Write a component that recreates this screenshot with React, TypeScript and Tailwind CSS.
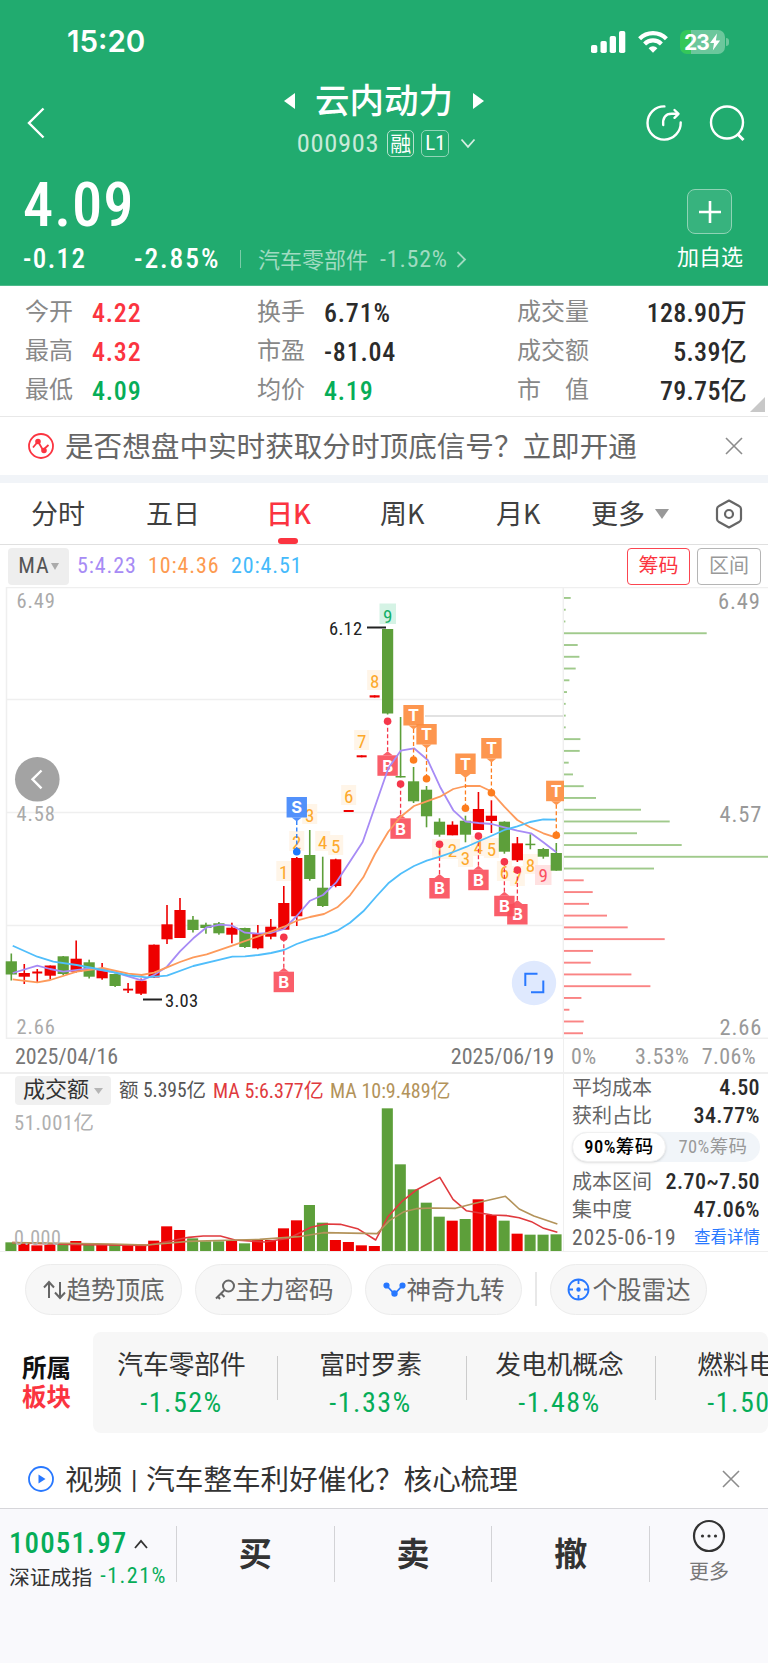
import type { ReactNode } from "react";

const RED = "#ee0000";
const GREEN = "#5d9f3a";

// [up(1)/down(0), high, body top, body bottom, low]
const candles = [
    [0, 953.5, 961.3, 974.5, 980.5], [1, 964, 973, 976.7, 984], [1, 969, 971.5, 973.5, 982],
    [1, 965.5, 965.5, 975.7, 979.5], [0, 956, 956.3, 974, 975], [1, 940.5, 958.7, 971.7, 972.5],
    [0, 959.7, 962.3, 976.7, 978.5], [1, 963, 969.5, 978.3, 979.7], [0, 973.5, 974, 986, 987],
    [1, 983, 988.7, 990.5, 993], [1, 978.5, 980.7, 993.7, 995], [1, 944.5, 944.7, 977.5, 978],
    [1, 905, 924.3, 939.3, 944], [1, 898, 910, 938, 938], [0, 916, 919.7, 930, 932.5],
    [0, 922.7, 924.7, 928, 933.7], [0, 922, 923.3, 933.3, 934.7], [1, 922.7, 927.7, 934.7, 943.3],
    [0, 927.7, 928, 947, 948], [1, 925, 933.3, 948.3, 949.3], [1, 919, 926.7, 936.7, 939.3],
    [1, 886, 903, 929.7, 929.7], [1, 857, 858, 916.3, 926], [0, 830, 855, 879, 880.7],
    [0, 856.7, 887.7, 906, 907], [1, 858.7, 859.3, 886, 887.3], [1, 810, 810, 812, 812],
    [1, 755.3, 755.3, 757.3, 757.3], [1, 695.3, 695.3, 697.5, 697.5], [0, 629, 629, 713.5, 714.5],
    [0, 717, 776, 777.5, 777.5], [0, 767, 781.3, 801.3, 803], [0, 786, 789.7, 816.3, 827.3],
    [0, 818.3, 821.7, 834.7, 836.7], [1, 821.3, 824.7, 835.3, 835.3], [0, 815.7, 820.7, 834.7, 842.3],
    [1, 792, 809, 830, 830], [1, 800.3, 815.7, 821, 833], [0, 821.3, 821.7, 851.7, 853.7],
    [1, 837, 843.3, 860.3, 862], [0, 834.3, 843.7, 845.2, 849.3], [0, 848, 849, 856.7, 858.7],
    [0, 843, 853, 870.7, 870.7],
];

const ma5 = "12.7,973 37.3,965.7 50,969 63.3,971.7 90,968.3 115,972.3 141.7,980.3 154,975 167,966.7 180,951.3 193.3,938.3 206.7,927.3 220,924.7 232.3,925.7 245,932.7 258.3,933.7 271,933 284,929 296.7,916 310,900.7 323,895 336,882.7 349,863 362.7,842 388.3,768.3 400.7,750.7 414,748.3 427.7,760 440,786.7 453.3,810.3 465.7,821.7 478.7,823 491.7,824 504.3,827.3 517.3,830.7 531,833.3 543.3,842.3 556.3,852.3";
const ma10 = "12.7,979.3 37.3,982.3 50.3,980 76.7,971.7 102.7,968 128.3,973.7 141.7,975 154,972.7 167,967.3 180,962 193.3,957.3 206.7,954.3 232.3,945.7 258.3,936.3 284,926.7 296.7,920.7 310,917 324,914 337.3,907.3 350,895.3 363.3,877.3 375,854 388.3,831.7 400.7,816.7 414,806 426.7,801.3 440,796.7 453.3,789 465.7,786 480,786 490,790.7 504.3,806.7 517.3,820 530,827.3 543.3,833.3 556.3,837.7";
const ma20 = "12.7,945.7 37.3,956.7 53.3,961.7 76.7,965 102.7,970 128.3,975.3 146.7,977.3 167,975.7 193.3,966 220,959.7 232.3,956.7 245,956.3 258.3,955 271,953 284,950 296.7,944 310,939.3 324,935.7 337.3,930.7 350,922.7 363.3,911.3 376.7,896 388.3,883.3 400.7,873.7 414,866 426.7,860.7 440,856.7 453.3,852 466.7,846.7 480,840.7 493.3,835 504.3,830 517.3,826.3 530,822 543.3,819.3 556.3,819.7";

// [digit, candle index, center y]
const nines = [
    [1, 21, 872], [2, 22, 842], [3, 23, 815], [4, 24, 842], [5, 25, 846], [6, 26, 796], [7, 27, 741], [8, 28, 681],
    [1, 33, 850], [2, 34, 850], [3, 35, 858], [4, 36, 847], [5, 37, 849], [6, 38, 872], [7, 39, 877], [8, 40, 865],
];

// [candle index, box top, dot y]
const sellTags = [[31, 705, 760], [32, 724, 778.7], [35, 753.5, 808.3], [37, 738, 792.7], [42, 780.7, 835.3]];
const buyTags = [[21, 971.7, 937.3], [29, 755.3, 721.3], [30, 818.3, 784], [33, 878, 844.3], [36, 869.7, 836], [39, 904, 870], [38, 895.7, 861.7]];

const chips = [
    7, 2, 1.7, 143, 14, 15.7, 12, 5.7, 3.3, 2, 2, 2, 16.7, 16, 5, 9.3, 20, 32.3, 77.3, 106, 73.3, 118, 204.3, 90.3,
    20, 29, 25.3, 43.3, 64, 101, 29.3, 27, 67.7, 86.7, 17.7, 5.7, 20, 19.3,
];

const volumeTops = [
    607, 612, 616, 614, 612, 603, 614, 612, 614, 616, 614, 602, 559, 570, 595, 604, 604, 603, 610, 600, 600, 565,
    541, 495, 548, 600, 606, 616, 618, 205, 373, 448, 488, 530, 542, 537, 478, 525, 542, 581, 584, 584, 583,
];

const sectors = [
    { name: "汽车零部件", change: "-1.52%" },
    { name: "富时罗素", change: "-1.33%" },
    { name: "发电机概念", change: "-1.48%" },
    { name: "燃料电池", change: "-1.50%" },
];

const cx = (i: number) => 11.3 + 12.976 * i;

function StatusBar() {
    return (
        <div className="h-[84px] pl-[67px] pr-[39px] flex items-center justify-between">
            <span className="font-['Inter'] text-[29.5px] font-semibold leading-none">15:20</span>
            <div className="flex items-center gap-3">
                <svg width="35" height="22" viewBox="0 0 35 22" fill="#fff">
                    <rect x="0" y="14" width="6.3" height="8" rx="1.8" />
                    <rect x="9.5" y="10" width="6.3" height="12" rx="1.8" />
                    <rect x="18.7" y="5" width="6.3" height="17" rx="1.8" />
                    <rect x="28" y="0" width="6.3" height="22" rx="1.8" />
                </svg>
                <svg width="30" height="22" viewBox="0 0 30 22" fill="none" stroke="#fff" strokeWidth="4.2">
                    <path d="M1.6 7.7a19 19 0 0 1 26.8 0" />
                    <path d="M6.6 12.9a12 12 0 0 1 16.8 0" />
                    <path d="M15 21.8l-4.4-4.6a6.2 6.2 0 0 1 8.8 0z" fill="#fff" stroke="none" />
                </svg>
                <div className="flex items-center gap-px">
                    <div className="w-[45px] h-6 rounded-[7px] overflow-hidden flex items-center justify-center bg-[linear-gradient(90deg,#34c759_24%,#6bc79c_24%)]">
                        <span className="font-['Inter'] text-[21px] font-bold leading-none tracking-[-0.8px]">23</span>
                        <svg width="12" height="18" viewBox="0 0 11 18" fill="#fff">
                            <path d="M7.5 0.5L0.5 10h4L3.3 17.5L10.6 7.5H6.4z" />
                        </svg>
                    </div>
                    <div className="w-[3px] h-2 rounded-r-full bg-[#6bc79c]" />
                </div>
            </div>
        </div>
    );
}

function Header() {
    return (
        <header className="h-[286px] bg-[#21ab6f] text-white border-b border-[#4dba8b]">
            <StatusBar />
            <div className="h-[80px] flex justify-between">
                <div className="w-[200px] pl-[26px] pt-[23px]">
                    <svg width="20" height="32" viewBox="0 0 20 32" fill="none" stroke="#fff" strokeWidth="2.4">
                        <path d="M17.5 1.5L3 16l14.5 14.5" />
                    </svg>
                </div>
                <div className="flex flex-col items-center">
                    <div className="h-[34px] flex items-center gap-5">
                        <svg width="11" height="16" viewBox="0 0 11 16" fill="#fff"><path d="M11 0v16L0 8z" /></svg>
                        <span className="pb-[5px] text-[34.5px] leading-none font-medium">云内动力</span>
                        <svg width="11" height="16" viewBox="0 0 11 16" fill="#fff"><path d="M0 0v16l11-8z" /></svg>
                    </div>
                    <div className="mt-[11px] pl-[5px] h-7 flex items-center">
                        <span className="num text-[26.5px] leading-none tracking-[0.7px] text-[#c8ead9]">000903</span>
                        <span className="ml-2 w-[27px] h-[27px] pb-px border-[1.5px] border-[#b5e2cd] rounded-[5px] flex items-center justify-center text-[21px] leading-none">融</span>
                        <span className="num ml-[7px] w-7 h-[27px] border border-[#90d5b7] rounded-[5px] flex items-center justify-center text-[21px] leading-none">L1</span>
                        <svg className="ml-[11px]" width="16" height="11" viewBox="0 0 16 11" fill="none" stroke="#d3eee1" strokeWidth="1.8">
                            <path d="M1.5 1.5L8 8.8l6.5-7.3" />
                        </svg>
                    </div>
                </div>
                <div className="w-[200px] pr-[23px] pt-5 flex justify-end gap-[26px]">
                    <svg width="38" height="38" viewBox="0 0 38 38" fill="none" stroke="#fff" strokeWidth="2.4" strokeLinecap="round" strokeLinejoin="round">
                        <path d="M19.4 2.4a16.6 16.6 0 1 0 16.3 16" />
                        <path d="M18.200 21c-.7-7.200 2.300-11.200 8.300-11.200h5.500" />
                        <path d="M29.500 6l4 3.800-4 4" />
                    </svg>
                    <svg width="36" height="38" viewBox="0 0 36 38" fill="none" stroke="#fff" strokeWidth="2.4">
                        <circle cx="18" cy="18.500" r="16" />
                        <path d="M28.500 30l6 6" strokeWidth="3" />
                    </svg>
                </div>
            </div>
            <div className="h-[121px] pl-[23px] pr-[25px] flex justify-between">
                <div>
                    <div className="num mt-[11px] text-[60.500px] leading-[62px] tracking-[1px] font-medium">4.09</div>
                    <div className="mt-2 h-7 flex items-center leading-none">
                        <span className="num w-[111px] text-[27px] tracking-[1.400px] font-medium">-0.12</span>
                        <span className="num w-[106px] text-[27.500px] tracking-[1.900px] font-medium">-2.85%</span>
                        <span className="w-px h-[18px] bg-[#7acca8]" />
                        <span className="ml-[17px] pb-0.5 text-[22px] text-[#a0dbc1]">汽车零部件</span>
                        <span className="num ml-3 text-[24px] tracking-[0.800px] text-[#a0dbc1]">-1.52%</span>
                        <svg className="ml-2" width="11" height="17" viewBox="0 0 11 17" fill="none" stroke="#a0dbc1" strokeWidth="1.8">
                            <path d="M1.500 1L9 8.500 1.500 16" />
                        </svg>
                    </div>
                </div>
                <div className="flex flex-col items-center pt-[25px]">
                    <div className="w-[45px] h-[45px] border-[1.5px] border-[#8fd3b5] rounded-lg bg-[#37b37e] flex items-center justify-center">
                        <svg width="24" height="24" viewBox="0 0 24 24" stroke="#fff" strokeWidth="2.600"><path d="M12 1v22M1 12h22" /></svg>
                    </div>
                    <span className="mt-[10px] text-[22px] leading-none">加自选</span>
                </div>
            </div>
        </header>
    );
}

function Stat({ label, value, color = "text-[#2b2b2b]", wide }: { label: string; value: string; color?: string; wide?: boolean }) {
    return (
        <div className={`h-[39px] flex items-center leading-none ${wide ? "justify-between tracking-[0.300px]" : "tracking-[0.800px]"}`}>
            <span className="w-[72px] shrink-0 pb-[3px] text-[24px] tracking-normal text-[#888] -mr-[5px] whitespace-pre">{label}</span>
            <span className={`num pt-0.5 text-[26px] font-medium ${color}`}>{value}</span>
        </div>
    );
}

function Stats() {
    return (
        <section className="relative h-[131px] pt-1.5 pl-[25px] pr-[21px] flex border-b border-[#e8e8e8]">
            <div className="w-[232px]">
                <Stat label="今开" value="4.22" color="text-[#fb3440]" />
                <Stat label="最高" value="4.32" color="text-[#fb3440]" />
                <Stat label="最低" value="4.09" color="text-[#06ad58]" />
            </div>
            <div className="w-[260px]">
                <Stat label="换手" value="6.71%" />
                <Stat label="市盈" value="-81.04" />
                <Stat label="均价" value="4.19" color="text-[#06ad58]" />
            </div>
            <div className="flex-1">
                <Stat wide label="成交量" value="128.90万" />
                <Stat wide label="成交额" value="5.39亿" />
                <Stat wide label="市　值" value="79.75亿" />
            </div>
            <svg className="absolute right-[3px] bottom-1" width="15" height="15" viewBox="0 0 15 15" fill="#c8c8c8"><path d="M15 0v15H0z" /></svg>
        </section>
    );
}

function CloseIcon() {
    return (
        <svg width="18" height="18" viewBox="0 0 18 18" stroke="#8c8c8c" strokeWidth="1.6"><path d="M1 1l16 16M17 1L1 17" /></svg>
    );
}

function Notice() {
    return (
        <section className="h-[66px] pl-7 pr-[25px] flex items-center border-b-8 border-[#f1f4f8]">
            <svg width="26" height="26" viewBox="0 0 26 26" fill="none" stroke="#fb3440" strokeWidth="1.800">
                <circle cx="13" cy="13" r="12" />
                <path d="M5 14.500l5-6 5 8.500 5.500-5" />
                <circle cx="10" cy="8.500" r="1.900" fill="#fb3440" />
                <circle cx="16" cy="17.500" r="1.900" fill="#fb3440" />
            </svg>
            <span className="ml-[11px] pb-px flex-1 text-[28.600px] leading-none text-[#666] whitespace-nowrap">是否想盘中实时获取分时顶底信号？立即开通</span>
            <CloseIcon />
        </section>
    );
}

function Tabs() {
    return (
        <nav className="h-[62px] pl-[31px] pr-[25px] flex items-center text-[27px] leading-none text-[#404040] border-b border-[#e0e0e0]">
            <span className="w-[115px] pb-[3px]">分时</span>
            <span className="w-[120px] pb-[3px]">五日</span>
            <span className="relative h-full w-[114px] pb-[3px] flex items-center text-[#fb3440] font-medium">
                日K
                <i className="absolute left-3 bottom-0 w-5 h-1.5 rounded-full bg-[#fb3440]" />
            </span>
            <span className="w-[116px] pb-[3px]">周K</span>
            <span className="w-[95px] pb-[3px]">月K</span>
            <span className="flex-1 flex items-center gap-2.5">
                <span className="pb-[3px]">更多</span>
                <svg width="14" height="10" viewBox="0 0 14 10" fill="#999"><path d="M0 0h14L7 10z" /></svg>
            </span>
            <svg width="28" height="30" viewBox="0 0 28 30" fill="none" stroke="#666" strokeWidth="2.200" strokeLinejoin="round">
                <path d="M14 1.500l10 5.500q2 1 2 3v10q0 2-2 3l-10 5.500L4 23q-2-1-2-3V10q0-2 2-3z" />
                <circle cx="14" cy="15" r="4" />
            </svg>
        </nav>
    );
}

function MaBar() {
    return (
        <div className="num h-[42px] pl-2 pr-[7px] flex items-center leading-none text-[22px]">
            <span className="w-[61px] h-[37px] rounded bg-[#eee] text-[#555] tracking-[1px] flex items-center justify-center gap-px">
                MA
                <svg width="8" height="7" viewBox="0 0 8 7" fill="#aaa"><path d="M0 0h8L4 7z" /></svg>
            </span>
            <span className="ml-2 w-[71px] tracking-[0.900px] text-[#a78bf5]">5:4.23</span>
            <span className="w-[83px] tracking-[0.900px] text-[#fd9a50]">10:4.36</span>
            <span className="flex-1 tracking-[0.900px] text-[#45bafb]">20:4.51</span>
            <span className="w-[63px] h-[37px] border-[1.5px] border-[#fb4550] rounded text-[20px] text-[#fb3440] flex items-center justify-center">筹码</span>
            <span className="ml-[7px] w-16 h-[37px] border-[1.5px] border-[#b5b5b5] rounded text-[20px] text-[#999] flex items-center justify-center">区间</span>
        </div>
    );
}

function Tag({ x, top, dot, letter, fill, dotFill }: { x: number; top: number; dot: number; letter: string; fill: string; dotFill: string }) {
    const below = dot < top;
    const tip = below ? `M${x - 5} ${top}L${x} ${top - 4}L${x + 5} ${top}z` : `M${x - 5} ${top + 20.5}L${x} ${top + 24.5}L${x + 5} ${top + 20.5}z`;
    return (
        <g>
            <path d={`M${x} ${below ? top - 4 : top + 24}V${dot}`} stroke={dotFill} strokeWidth="1.3" strokeDasharray="4 2.5" />
            <circle cx={x} cy={dot} r="3.8" fill={dotFill} />
            <path d={`M${x - 10.2} ${top}h20.4v20.5h-20.4z`} fill={fill} fillOpacity="0.9" />
            <path d={tip} fill={fill} fillOpacity="0.9" />
            <text className="font-['Inter']" x={x} y={top + 16.300} textAnchor="middle" fontSize="16.500" fontWeight="700" fill="#fff">{letter}</text>
        </g>
    );
}

function KLineChart() {
    return (
        <svg className="num block" width="564" height="452" viewBox="0 587 564 452">
            <g stroke="#efefef" strokeWidth="1.5" fill="none">
                <path d="M6 587.500H564M6 699.500H564M6 812.500H564M6 925.500H564M6 1038.200H564M6.500 587V1039M563.300 587V1039" />
            </g>
            <path d="M425 716H563" stroke="#e2e2e2" strokeWidth="2" />
            <g fontSize="20.500" fill="#aaa" letterSpacing="0.900">
                <text x="16.500" y="607.500">6.49</text>
                <text x="16.500" y="820.500">4.58</text>
                <text x="16.500" y="1034">2.66</text>
            </g>
            {nines.map(([n, i, y]) => (
                <g key={i}>
                    <rect x={cx(i) - 7.500} y={y - 11} width="15" height="20" fill="#fff5e8" />
                    <text x={cx(i)} y={y + 7} textAnchor="middle" fontSize="19" fill="#fda92c">{n}</text>
                </g>
            ))}
            <rect x="379.500" y="603.500" width="16.500" height="20.500" fill="#d5f3e5" />
            <text x="387.600" y="622.500" textAnchor="middle" fontSize="19" fill="#14b068">9</text>
            <rect x="535" y="865" width="16.500" height="20" fill="#ffe1e1" />
            <text x="543.300" y="882" textAnchor="middle" fontSize="19" fill="#fb5060">9</text>
            {candles.map(([up, high, top, bottom, low], i) => (
                <g key={i} fill={up ? RED : GREEN}>
                    <rect x={cx(i) - 0.8} y={high} width="1.600" height={low - high} />
                    <rect x={cx(i) - (bottom - top < 2.500 ? 5 : 5.600)} y={top} width={bottom - top < 2.500 ? 10 : 11.200} height={bottom - top} />
                </g>
            ))}
            {buyTags.map(([i, top, dot]) => (
                <Tag key={i} x={cx(i)} top={top} dot={dot} letter="B" fill="#f94c5a" dotFill="#f5364a" />
            ))}
            <g fill="none" strokeWidth="1.800" strokeLinejoin="round">
                <polyline points={ma5} stroke="#a78bf5" />
                <polyline points={ma10} stroke="#fd9a5b" />
                <polyline points={ma20} stroke="#50befb" />
            </g>
            {sellTags.map(([i, top, dot]) => (
                <Tag key={i} x={cx(i)} top={top} dot={dot} letter="T" fill="#fd8b3c" dotFill="#fd7d1e" />
            ))}
            <Tag x={cx(22)} top={797} dot={851.7} letter="S" fill="#3f85fb" dotFill="#1e78fb" />
            <g fontSize="18.500" fill="#222" letterSpacing="0.300">
                <text x="329" y="634.500">6.12</text>
                <text x="165" y="1006.500">3.03</text>
                <path d="M367 627.500H386M143 999.500H162" stroke="#222" strokeWidth="1.800" />
            </g>
            <circle cx="37.300" cy="779.300" r="22.300" fill="#a3a3a3" />
            <path d="M41.500 770.500L32.500 779.300l9 9" fill="none" stroke="#fff" strokeWidth="2.400" />
            <circle cx="534" cy="983" r="22.200" fill="#dfe9fe" />
            <path d="M525.300 986V973.700H537.500M543.300 980.500V992.200H531" fill="none" stroke="#2878ff" strokeWidth="2" />
        </svg>
    );
}

function ChipDistribution() {
    return (
        <svg className="num block" width="204" height="452" viewBox="564 587 204 452">
            <path d="M564 587.500H768M564 1038.200H768" stroke="#efefef" strokeWidth="1.500" />
            {chips.map((w, i) => (
                <rect key={i} x="563.700" y={597 + i * 11.765} width={w} height="1.900" fill={i < 24 ? "#a0ca8c" : "#fa8484"} />
            ))}
            <g fontSize="22.500" fill="#999" letterSpacing="0.900">
                <text x="718" y="609">6.49</text>
                <text x="719.500" y="822">4.57</text>
                <text x="719.500" y="1035">2.66</text>
            </g>
        </svg>
    );
}

function VolumeChart() {
    return (
        <div className="relative w-[564px] h-[180px] border-t-2 border-r border-b border-[#efefef]">
            <svg className="absolute left-0 bottom-0" width="563" height="176" viewBox="0 105 1149.500 528" preserveAspectRatio="none">
                {volumeTops.map((top, i) => (
                    <rect key={i} x={11 + 26.500 * i} y={top} width="22.600" height={633 - top} fill={candles[i][0] ? RED : GREEN} />
                ))}
                <g fill="none" strokeWidth="1.600" strokeLinejoin="round">
                    <polyline vectorEffect="non-scaling-stroke" stroke="#e03a3e" points="25,608 140,613 300,616 345,604 385,592 415,588 450,588 480,600 540,606 590,595 635,562 665,552 695,553 730,566 767,600 792,530 820,485 850,450 898,412 925,478 952,512 1005,525 1035,527 1060,533 1085,545 1110,565 1138,577" />
                    <polyline vectorEffect="non-scaling-stroke" stroke="#b3935a" points="25,608 230,612 300,615 385,604 530,598 610,590 660,578 770,581 795,542 825,515 850,506 885,504 930,505 970,490 1032,469 1060,507 1090,528 1138,552" />
                </g>
            </svg>
            <div className="relative pt-0.5 pl-[15px] flex items-center leading-none num text-[20px] whitespace-nowrap">
                <span className="w-24 h-[29px] rounded-sm bg-[#f0f0f0] flex items-center justify-center gap-[5px] text-[22px] text-[#333]">
                    <span className="pb-px">成交额</span>
                    <svg width="9" height="6" viewBox="0 0 9 6" fill="#b5b5b5"><path d="M0 0h9L4.500 6z" /></svg>
                </span>
                <span className="ml-2 pt-px w-[94px] text-[#555] text-[19.500px]">额 5.395亿</span>
                <span className="w-[117px] pt-px text-[#e03a3e]">MA 5:6.377亿</span>
                <span className="pt-px text-[#b3935a]">MA 10:9.489亿</span>
            </div>
            <div className="relative num ml-3.5 mt-2 text-[20.500px] leading-none tracking-[0.600px] text-[#b0b0b0]">51.001亿</div>
            <div className="absolute num left-3.5 bottom-[3px] text-[20px] leading-none tracking-[0.500px] text-[#b0b0b0]">0.000</div>
        </div>
    );
}

function CostRow({ label, children }: { label: string; children: ReactNode }) {
    return (
        <div className="h-7 flex items-center justify-between leading-none text-[20px] text-[#666]">
            <span className="pb-px">{label}</span>
            {children}
        </div>
    );
}

function CostValue({ children }: { children: ReactNode }) {
    return <b className="font-medium text-[22px] tracking-[0.400px] text-[#2b2b2b]">{children}</b>;
}

function CostPanel() {
    return (
        <div className="flex-1 px-2 border-t-2 border-b border-[#efefef] h-[180px] num">
            <CostRow label="平均成本"><CostValue>4.50</CostValue></CostRow>
            <CostRow label="获利占比"><CostValue>34.77%</CostValue></CostRow>
            <div className="mt-0.5 mb-1.5 h-[30px] rounded-full bg-[#f1f5f9] flex items-center text-[18.500px] leading-none tracking-[0.400px]">
                <span className="w-[94px] h-[30px] rounded-full border border-[#f0f0f0] bg-white shadow-sm text-black font-medium flex items-center justify-center">90%筹码</span>
                <span className="flex-1 text-center text-[#999]">70%筹码</span>
            </div>
            <CostRow label="成本区间"><CostValue>2.70~7.50</CostValue></CostRow>
            <CostRow label="集中度"><CostValue>47.06%</CostValue></CostRow>
            <div className="h-7 flex items-center justify-between leading-none">
                <span className="text-[21.500px] tracking-[0.900px] text-[#666]">2025-06-19</span>
                <span className="text-[16.500px] text-[#2878ff]">查看详情</span>
            </div>
        </div>
    );
}

function Pill({ icon, children }: { icon: ReactNode; children: ReactNode }) {
    return (
        <span className="w-[157px] h-[51px] rounded-full border border-[#ececec] bg-[#f7f7f7] flex items-center justify-center text-[24.500px] leading-none text-[#666] whitespace-nowrap">
            {icon}
            <span>{children}</span>
        </span>
    );
}

function Tools() {
    return (
        <section className="h-[80px] pl-[25px] pt-[12px] flex items-start gap-[13px]">
            <Pill icon={<svg className="mr-px" width="23" height="20" viewBox="0 0 23 20" fill="none" stroke="#666" strokeWidth="2"><path d="M6 18V2.500M1 7.500l5-5.500 5 5.500M17 2v15.500M12 12.500l5 5.500 5-5.500" /></svg>}>趋势顶底</Pill>
            <Pill icon={<svg width="22" height="22" viewBox="0 0 22 22" fill="none" stroke="#666" strokeWidth="2"><circle cx="14.500" cy="7" r="5.500" /><path d="M10.500 11L2 19.500M7 14.500l3.500 3.500M3.500 17l2.500 3" /></svg>}>主力密码</Pill>
            <Pill icon={<svg width="24" height="20" viewBox="0 0 24 20" fill="none" stroke="#2878ff" strokeWidth="1.800"><path d="M3.500 5.500l8 8.500 8-8.500" /><circle cx="3.500" cy="5.500" r="2.200" fill="#2878ff" /><circle cx="19.500" cy="5.500" r="2.200" fill="#2878ff" /><circle cx="11.500" cy="13.500" r="2.300" fill="#2878ff" /></svg>}>神奇九转</Pill>
            <span className="w-0.5 h-[34px] mt-2 bg-[#e8e8e8]" />
            <Pill icon={<svg className="mr-[3px]" width="23" height="23" viewBox="0 0 23 23" fill="none" stroke="#2878ff" strokeWidth="1.800"><circle cx="11.500" cy="11.500" r="10" /><path d="M11.500 1v5M11.500 17v5M1 11.500h5M17 11.500h5" /><circle cx="11.500" cy="11.500" r="1.300" fill="#2878ff" /></svg>}>个股雷达</Pill>
        </section>
    );
}

function Sectors() {
    return (
        <section className="h-[101px] flex items-stretch overflow-hidden">
            <div className="w-[93px] shrink-0 pb-[3px] flex flex-col items-center justify-center text-[24.500px] leading-[29.500px] font-bold">
                <span className="text-[#111]">所属</span>
                <span className="text-[#fb3440]">板块</span>
            </div>
            <div className="flex-1 rounded-lg bg-[#f7f7f7] flex overflow-hidden">
                <div className="flex -ml-1 pt-0.5 items-center">
                    {sectors.map((s) => (
                        <div key={s.name} className="relative w-[189px] pr-1 shrink-0 flex flex-col items-center leading-none">
                            <span className="text-[25.700px] text-[#333]">{s.name}</span>
                            <span className="num mt-[13px] text-[28px] tracking-[1.500px] text-[#06ad58]">{s.change}</span>
                            <i className="absolute right-0 top-1.5 w-px h-11 bg-[#ccc]" />
                        </div>
                    ))}
                </div>
            </div>
        </section>
    );
}

function VideoNews() {
    return (
        <section className="h-[75px] pt-[17px] pl-7 pr-7 flex items-center">
            <svg width="26" height="26" viewBox="0 0 26 26" fill="none" stroke="#2878ff" strokeWidth="1.800">
                <circle cx="13" cy="13" r="12" />
                <path d="M10.500 8.500v9l7-4.500z" fill="#2878ff" stroke="none" />
            </svg>
            <span className="ml-[11px] pb-px flex-1 text-[28.600px] leading-none text-[#333] whitespace-nowrap">
                视频<span className="text-[24px]">丨</span>汽车整车利好催化？核心梳理
            </span>
            <CloseIcon />
        </section>
    );
}

function TradeBar() {
    return (
        <footer className="h-[155px] pt-[17px] bg-[#f9f9fc] border-t border-[#d6d6da] flex items-start leading-none">
            <div className="w-[176px] h-[56px] pl-[9px] flex flex-col">
                <span className="num mt-[3px] flex items-center gap-[7px] text-[29px] tracking-[1.100px] font-medium text-[#06ad58]">
                    10051.97
                    <svg width="14" height="10" viewBox="0 0 14 10" fill="none" stroke="#333" strokeWidth="1.800"><path d="M1 9l6-7 6 7" /></svg>
                </span>
                <span className="mt-[7px] flex items-center text-[20.800px] text-[#333] whitespace-nowrap">
                    深证成指 <span className="num ml-2 text-[22px] tracking-[1.500px] text-[#06ad58]">-1.21%</span>
                </span>
            </div>
            {["买", "卖", "撤"].map((t) => (
                <div key={t} className="w-[157.700px] h-[56px] pb-[3px] border-l border-[#d3d3d6] flex items-center justify-center text-[33px] font-bold text-[#333]">{t}</div>
            ))}
            <div className="flex-1 h-[56px] border-l border-[#d3d3d6] flex flex-col items-center">
                <svg className="-mt-[7px] shrink-0" width="34" height="34" viewBox="0 0 34 34" fill="none" stroke="#333" strokeWidth="2.200">
                    <circle cx="17" cy="17" r="15" />
                    <g fill="#333" stroke="none"><circle cx="10.500" cy="17" r="1.600" /><circle cx="17" cy="17" r="1.600" /><circle cx="23.500" cy="17" r="1.600" /></g>
                </svg>
                <span className="mt-2 text-[20px] text-[#777]">更多</span>
            </div>
        </footer>
    );
}

export default function App() {
    return (
        <div className="w-[768px] h-[1663px] overflow-hidden bg-white font-['Noto_Sans_CJK_SC',sans-serif] [&_.num]:font-['Roboto_Condensed',Roboto,'Noto_Sans_CJK_SC',sans-serif] [&_.num]:[font-stretch:condensed]">
            <Header />
            <Stats />
            <Notice />
            <Tabs />
            <MaBar />
            <div className="flex">
                <KLineChart />
                <ChipDistribution />
            </div>
            <div className="num h-[33px] flex items-center leading-none text-[22px]">
                <div className="w-[564px] h-full pl-[15px] pr-[9px] pt-0.5 border-r border-[#efefef] flex items-center justify-between text-[#777]">
                    <span>2025/04/16</span>
                    <span>2025/06/19</span>
                </div>
                <div className="flex-1 pl-[7px] pr-3 pt-0.5 flex tracking-[0.400px] text-[#999]">
                    <span className="w-16">0%</span>
                    <span className="flex-1">3.53%</span>
                    <span>7.06%</span>
                </div>
            </div>
            <div className="flex">
                <VolumeChart />
                <CostPanel />
            </div>
            <Tools />
            <Sectors />
            <VideoNews />
            <TradeBar />
        </div>
    );
}
